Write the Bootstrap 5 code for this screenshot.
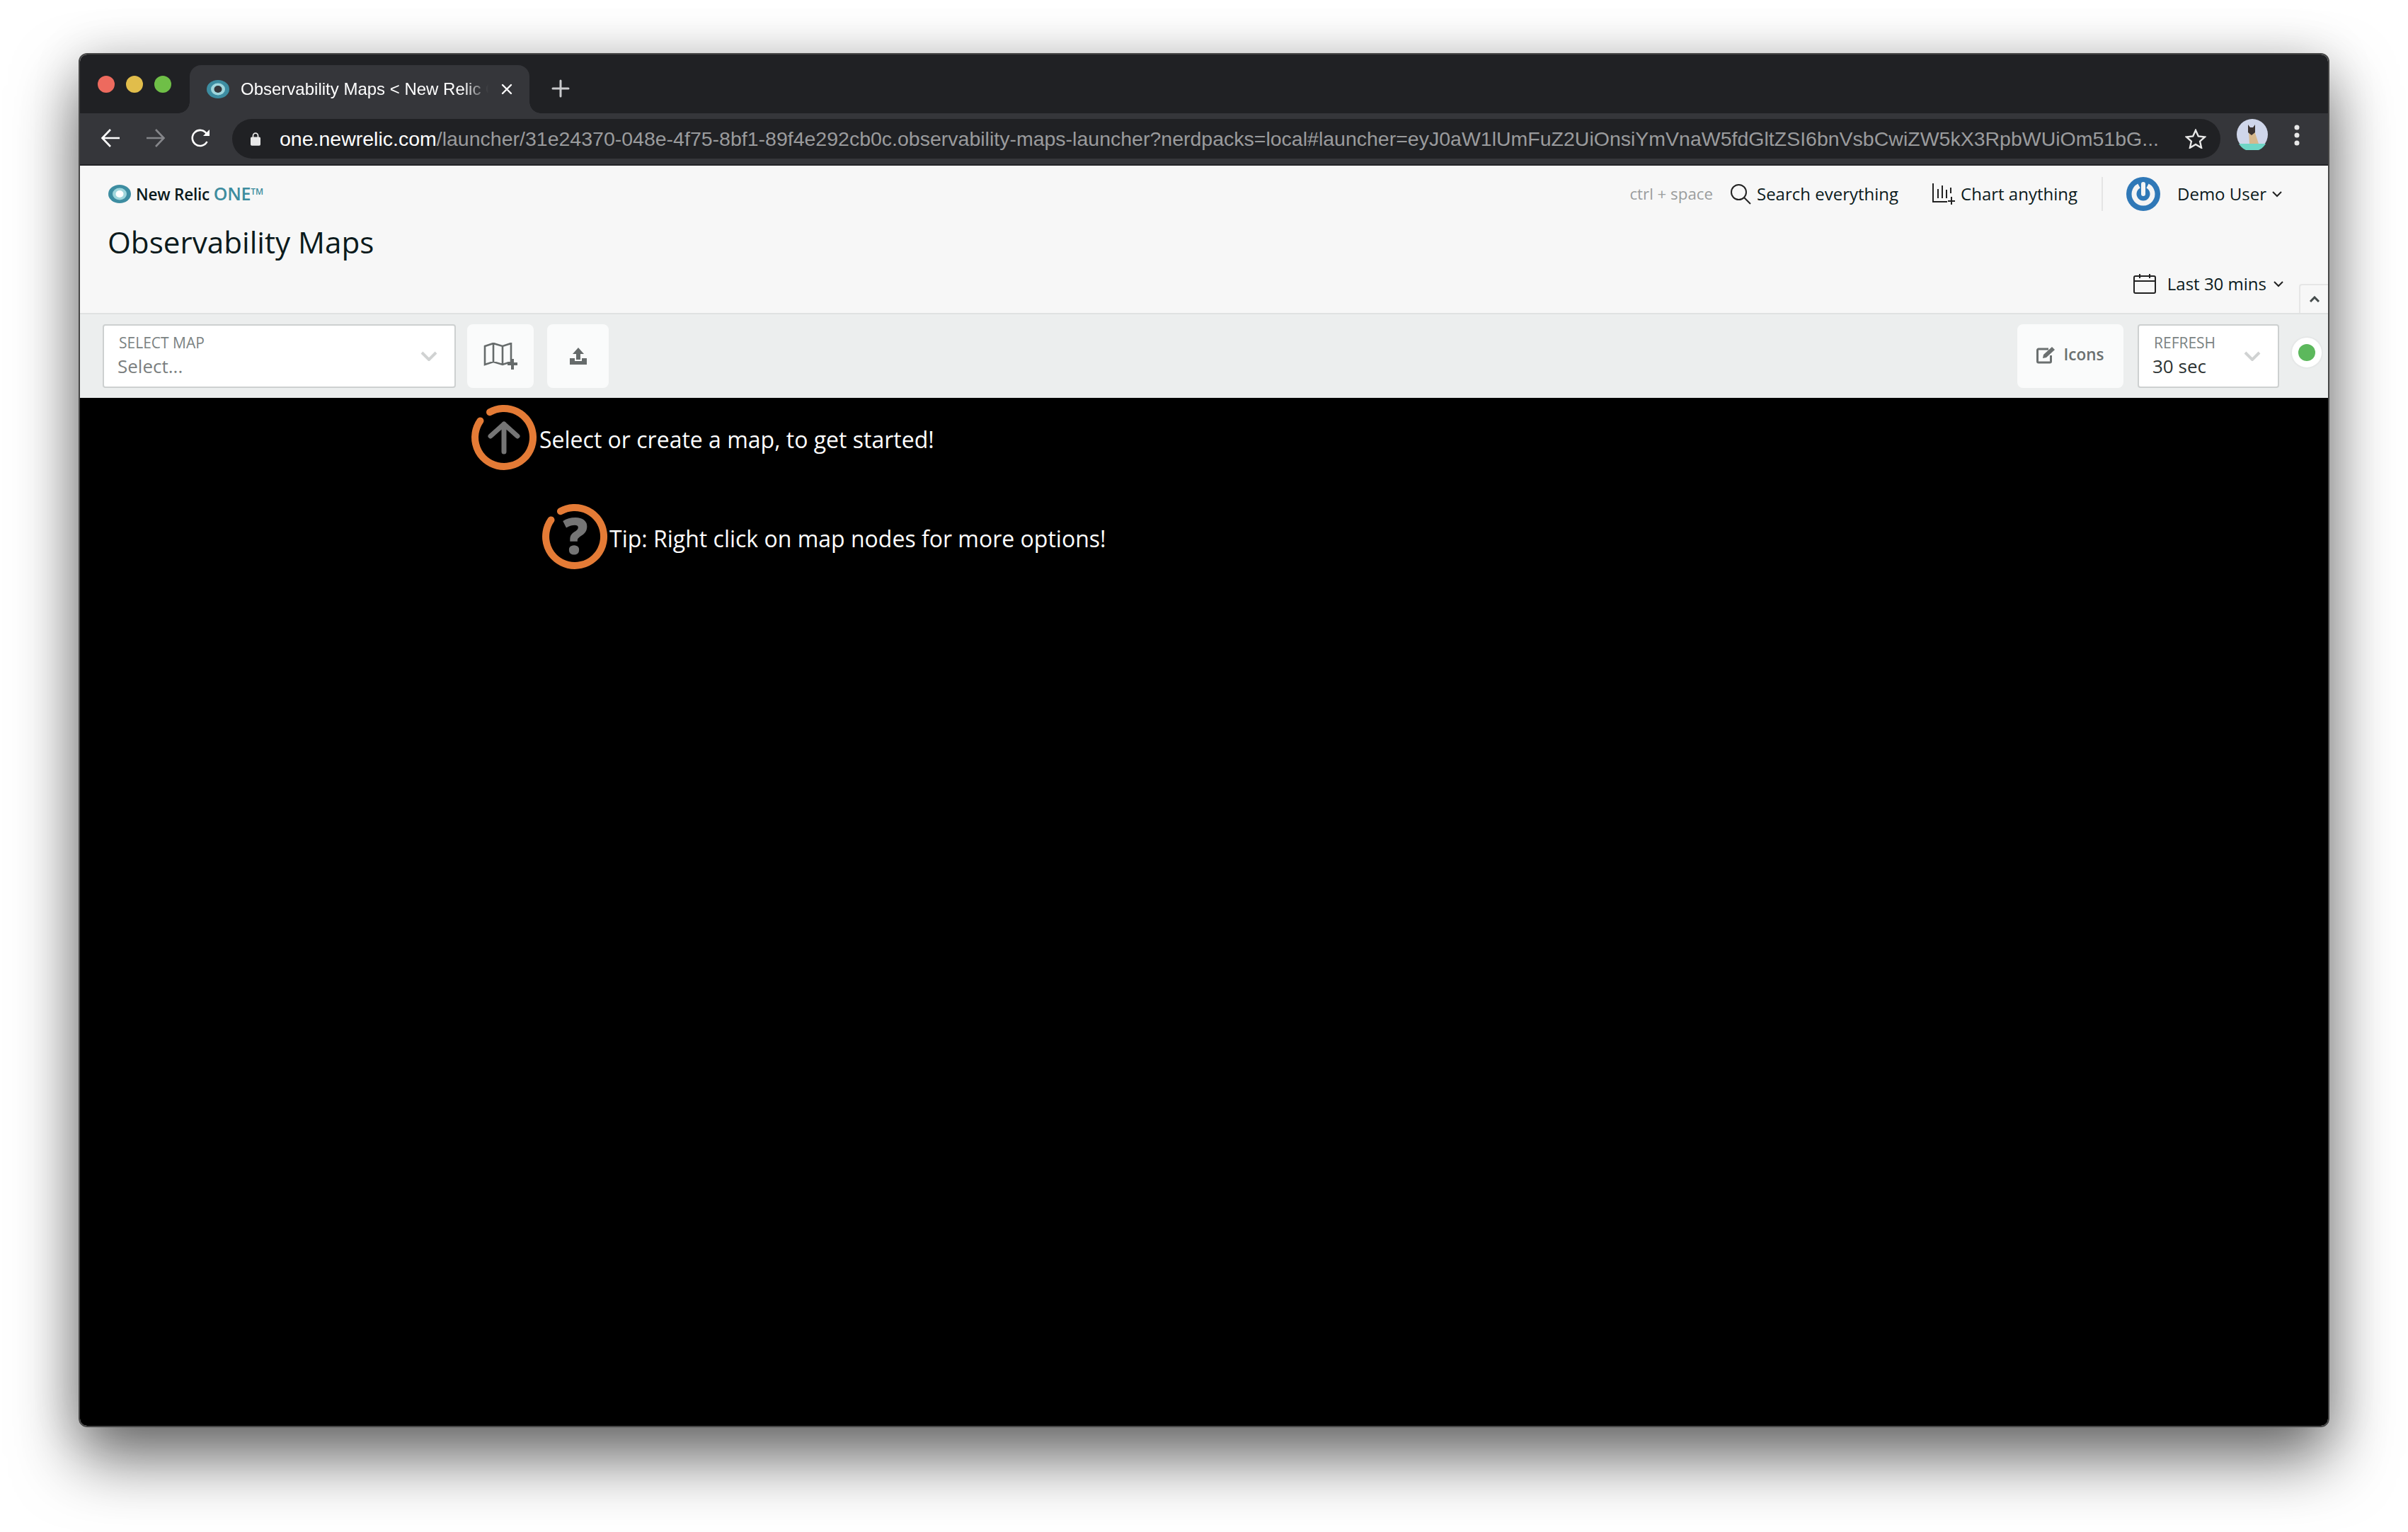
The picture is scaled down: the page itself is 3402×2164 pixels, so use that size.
<!DOCTYPE html>
<html lang="en">
<head>
<meta charset="utf-8">
<title>Observability Maps</title>
<link href="https://cdn.jsdelivr.net/npm/bootstrap@5.3.0/dist/css/bootstrap.min.css" rel="stylesheet">
<style>
html,body{height:100%;background:#fff;overflow:hidden}
body{font-family:"Open Sans",sans-serif;color:#0b1a1c}
.os-window{width:3180px;height:1941px;margin:75px 0 0 111px;border:2px solid #454545;border-radius:12px;overflow:hidden;box-shadow:0 44px 90px rgba(0,0,0,.58),0 0 70px rgba(0,0,0,.12);display:flex;flex-direction:column}
.tabstrip{height:83px;background:#202124;padding:15px 0 0 25px;flex:none}
.tl-dot{width:24px;height:24px;border-radius:50%;margin-top:15px}
.tl-r{background:#ed6a5e}.tl-y{background:#e1bd4b}.tl-g{background:#6fbf47}
.tl-dots{gap:16px;width:130px}
.chrome-tab{position:relative;width:480px;height:68px;background:#35363a;border-radius:16px 16px 0 0;padding:0 24px 0 24px;color:#fff;font:24px "Liberation Sans",Arial,sans-serif}
.chrome-tab::before,.chrome-tab::after{content:"";position:absolute;bottom:0;width:16px;height:16px}
.chrome-tab::before{left:-16px;background:radial-gradient(circle at 0 0,transparent 15.5px,#35363a 16px)}
.chrome-tab::after{right:-16px;background:radial-gradient(circle at 100% 0,transparent 15.5px,#35363a 16px)}
.tab-label{width:350px;margin-left:16px;white-space:nowrap;overflow:hidden;-webkit-mask-image:linear-gradient(90deg,#000 90%,transparent 100%);mask-image:linear-gradient(90deg,#000 90%,transparent 100%)}
.tab-new{margin:20px 0 0 31px}
.urlbar{height:72px;background:#35363a;border-bottom:2px solid #232427;box-sizing:content-box;flex:none}
.nav-glyphs{width:215px;height:70px;padding-left:29px;gap:28px}
.omnibox{width:2809px;height:56px;background:#202124;border-radius:28px;padding:0 20px 0 26px;font:28.5px/56px "Liberation Sans",Arial,sans-serif;color:#9a9b9d;white-space:nowrap}
.omnibox b{font-weight:400;color:#fff}
.url-text{margin-left:27px;width:2660px;flex:none}
.star-ico{margin-left:32px;flex:none}
.avatar-ico{margin-left:23px}
.menu-ico{margin-left:37px}
.pagehead{height:210px;background:#f7f7f7;border-bottom:2px solid #e0e2e2;position:relative;flex:none}
.headrow{height:80px;padding:0 65px 0 40px;font-size:24px}
.brand-name{font-size:22.5px;font-weight:600;margin-left:7px;letter-spacing:-.2px}
.brand-one{color:#3d8c9e;font-weight:600;font-size:25px}
.brand-tm{font-size:12px;vertical-align:8px;color:#3d8c9e}
.shortcut{color:#9a9d9d;font-size:22.3px}
.pagetitle{font-size:42.2px;font-weight:400;line-height:56px;margin:0 0 2px;padding-left:39px}
.vrule{width:2px;height:48px;background:#e4e4e4;margin-left:34px}
.power-ico{margin-left:33px}
.daterow{height:60px;padding:0 63px 2px 0;font-size:24px}
.date-chev{margin-left:10px}
.collapse-tab{position:absolute;right:0;bottom:0;width:41px;height:41px;border:2px solid #e6e6e6;border-width:2px 0 0 2px;border-radius:4px 0 0 0;display:flex;align-items:center;justify-content:center}
.toolrow{height:118px;background:#eceeee;padding:14px 7px 0 32px;flex:none}
.picker{background:#fff;border:2px solid #cdd0d0;border-radius:4px;height:90px;position:relative;padding:11px 0 0 19px;font-size:26px;flex:none}
.picker-map{width:499px;color:#7b7f7f}
.picker-refresh{width:200px;color:#2c3333;margin-left:20px}
.picker-label{display:block;font-size:21px;line-height:26px;color:#7a8282;margin-left:2px}
.picker-val{display:block;line-height:36px;margin-top:2px}
.picker-chev{position:absolute;right:24px;top:36px}
.tool-btn.btn{background:#fafbfb;border:0;border-radius:8px;height:90px;padding:0;display:flex;align-items:center;justify-content:center;flex:none}
.btn-map{width:94px;margin-left:16px}
.btn-up{width:87px;margin-left:19px}
.tool-btn.btn.btn-icons{width:150px;gap:11px;font-size:22.5px;font-weight:600;color:#6b7070;padding-bottom:4px}
.status-wrap{width:46px;height:46px;border-radius:50%;background:#fff;border:2px solid #e6e8e8;margin:17px 0 0 16px;flex:none}
.status-dot{width:24px;height:24px;border-radius:50%;background:#5cb85c}
.canvas-area{background:#000;flex:1 1 auto;color:#fff;padding-top:10px;font-size:32px}
.hint-one{margin-left:553px;gap:4px}
.hint-two{margin-left:653px;margin-top:48px;gap:3px}
.hint-text{padding-top:27px;line-height:44px}
.ring-ico{overflow:visible;flex:none}
.q-mark{font-family:"Open Sans",sans-serif;font-weight:800;font-size:70px;fill:#757575}
</style>
</head>
<body class="m-0">
<div class="os-window">
  <div class="tabstrip d-flex">
    <div class="tl-dots d-flex"><span class="tl-dot tl-r"></span><span class="tl-dot tl-y"></span><span class="tl-dot tl-g"></span></div>
    <div class="chrome-tab d-flex align-items-center">
      <svg width="32" height="26" viewBox="0 0 32 26"><ellipse cx="16" cy="13" rx="16" ry="13" fill="#3d8da1"/><ellipse cx="16" cy="13" rx="10" ry="8.5" fill="#9fd6dc"/><ellipse cx="16" cy="13" rx="5.5" ry="5" fill="#35363a"/></svg>
      <span class="tab-label">Observability Maps &lt; New Relic One</span>
      <svg width="16" height="16" viewBox="0 0 16 16" class="ms-auto" stroke="#fff" stroke-width="2.4" stroke-linecap="round"><path d="M2 2l12 12M14 2L2 14"/></svg>
    </div>
    <svg class="tab-new" width="26" height="26" viewBox="0 0 26 26" stroke="#c9cacc" stroke-width="3" stroke-linecap="round"><path d="M13 2v22M2 13h22"/></svg>
  </div>
  <div class="urlbar d-flex align-items-start">
    <div class="nav-glyphs d-flex align-items-center">
      <svg width="28" height="28" viewBox="0 0 28 28" fill="none" stroke="#fff" stroke-width="2.6"><path d="M27 14H3M14 2L2.5 14 14 26"/></svg>
      <svg width="28" height="28" viewBox="0 0 28 28" fill="none" stroke="#85868a" stroke-width="2.6" class="ms-2"><path d="M1 14h24M14 2l11.500 12L14 26"/></svg>
      <svg width="28" height="28" viewBox="0 0 28 28" fill="none" stroke="#fff" stroke-width="2.6" class="ms-2"><path d="M22.500 19a11 11 0 1 1-.5-11"/><path d="M26 2v9h-9z" fill="#fff" stroke="none"/></svg>
    </div>
    <div class="omnibox d-flex align-items-center mt-2">
      <svg width="16" height="22" viewBox="0 0 16 22" class="flex-none"><path d="M4 9V6a4 4 0 0 1 8 0v3" fill="none" stroke="#e8e8e8" stroke-width="2"/><rect y="8" width="16" height="14" rx="2" fill="#e8e8e8"/></svg>
      <span class="url-text"><b>one.newrelic.com</b>/launcher/31e24370-048e-4f75-8bf1-89f4e292cb0c.observability-maps-launcher?nerdpacks=local#launcher=eyJ0aW1lUmFuZ2UiOnsiYmVnaW5fdGltZSI6bnVsbCwiZW5kX3RpbWUiOm51bG...</span>
      <svg class="star-ico" width="30" height="28" viewBox="0 0 30 28" fill="none" stroke="#e8e8e8" stroke-width="2.4"><path d="M15 2l3.800 8.500 9.200 1-6.900 6.200 2 9.100L15 22l-8.100 4.800 2-9.100L2 11.500l9.200-1z"/></svg>
    </div>
    <svg width="44" height="44" viewBox="0 0 44 44" class="mt-2 avatar-ico"><circle cx="22" cy="22" r="22" fill="#cfd6ea"/><path d="M3 35h38a22 22 0 0 1-38 0z" fill="#6fd6c6"/><path d="M17 17l8 0 6 18h-13z" fill="#d7b88c"/><path d="M16 8l3 4h4l3-4v11l-5 4-5-4z" fill="#3a3230"/></svg>
    <svg width="8" height="32" viewBox="0 0 8 32" class="mt-3 menu-ico" fill="#e8e8e8"><circle cx="4" cy="4" r="3.500"/><circle cx="4" cy="15" r="3.500"/><circle cx="4" cy="26" r="3.500"/></svg>
  </div>
  <header class="pagehead">
    <div class="headrow d-flex align-items-center">
      <svg width="32" height="26" viewBox="0 0 32 26"><ellipse cx="16" cy="13" rx="16" ry="13" fill="#3d8da1"/><ellipse cx="16" cy="13" rx="10" ry="8.500" fill="#9fd6dc"/><ellipse cx="16" cy="13" rx="5.500" ry="5" fill="#fff"/></svg>
      <span class="brand-name">New Relic <span class="brand-one">ONE<span class="brand-tm">TM</span></span></span>
      <span class="shortcut ms-auto">ctrl + space</span>
      <svg width="30" height="30" viewBox="0 0 30 30" fill="none" stroke="#222" stroke-width="2" class="ms-4"><circle cx="12.500" cy="12.500" r="10.500"/><path d="M20 20l9 9"/></svg>
      <span class="ms-2">Search everything</span>
      <svg width="32" height="32" viewBox="0 0 32 32" fill="none" stroke="#222" stroke-width="2" class="ms-5"><path d="M1 1v26h20M8 9v13M14 4v18M20 10v12M26 7v8M27 20v11M22 26h10"/></svg>
      <span class="ms-2">Chart anything</span>
      <span class="vrule"></span>
      <svg width="48" height="48" viewBox="0 0 48 48" class="power-ico"><circle cx="24" cy="24" r="24" fill="#2f78b7"/><path d="M18 12.500a13 13 0 1 0 12 0" fill="none" stroke="#f4f4f4" stroke-width="7"/><path d="M24 10v14" stroke="#f4f4f4" stroke-width="6" stroke-linecap="round"/></svg>
      <span class="ms-4">Demo User</span>
      <svg width="14" height="9" viewBox="0 0 14 9" fill="none" stroke="#222" stroke-width="2" class="ms-2"><path d="M1 1l6 6 6-6"/></svg>
    </div>
    <h1 class="pagetitle">Observability Maps</h1>
    <div class="daterow d-flex align-items-center justify-content-end">
      <svg width="32" height="28" viewBox="0 0 32 28" fill="none" stroke="#222" stroke-width="2"><rect x="1" y="3" width="30" height="24" rx="2"/><path d="M1 10h30"/><path d="M9 0v6M23 0v6M13 3h6"/></svg>
      <span class="ms-3">Last 30 mins</span>
      <svg width="14" height="9" viewBox="0 0 14 9" fill="none" stroke="#222" stroke-width="2" class="date-chev"><path d="M1 1l6 6 6-6"/></svg>
    </div>
    <div class="collapse-tab"><svg width="14" height="9" viewBox="0 0 14 9" fill="none" stroke="#454c4c" stroke-width="3"><path d="M1 8l6-6 6 6"/></svg></div>
  </header>
  <div class="toolrow d-flex align-items-start">
    <div class="picker picker-map">
      <span class="picker-label">SELECT MAP</span>
      <span class="picker-val">Select...</span>
      <svg class="picker-chev" width="24" height="14" viewBox="0 0 24 14" fill="none" stroke="#d0d2d2" stroke-width="4"><path d="M2 2l10 10L22 2"/></svg>
    </div>
    <button type="button" class="btn tool-btn btn-map" aria-label="New map">
      <svg width="48" height="38" viewBox="0 0 48 38" fill="none" stroke="#666b6b" stroke-width="2.600"><path d="M2 5l12-4 13 4 12-4v26l-12 4-13-4-12 4zM14 1v26M27 5v26"/><path d="M41 23v15M34 30h14" stroke-width="4"/></svg>
    </button>
    <button type="button" class="btn tool-btn btn-up" aria-label="Upload">
      <svg width="24" height="24" viewBox="0 0 24 24" fill="#666b6b"><path d="M12 0l8 9h-5v8H9V9H4z"/><path d="M0 15h7v4h10v-4h7v9H0z"/></svg>
    </button>
    <button type="button" class="btn tool-btn btn-icons ms-auto">
      <svg width="27" height="25" viewBox="0 0 27 25" fill="none" stroke="#6b7070" stroke-width="3"><path d="M17 4H3a1.500 1.500 0 0 0-1.500 1.500v16A1.500 1.500 0 0 0 3 23h16a1.500 1.500 0 0 0 1.500-1.500V13"/><path d="M10 12l12-11 4 4-12 11-5 1z" fill="#6b7070" stroke="none"/></svg>
      Icons
    </button>
    <div class="picker picker-refresh">
      <span class="picker-label">REFRESH</span>
      <span class="picker-val">30 sec</span>
      <svg class="picker-chev" width="24" height="14" viewBox="0 0 24 14" fill="none" stroke="#d0d2d2" stroke-width="4"><path d="M2 2l10 10L22 2"/></svg>
    </div>
    <div class="status-wrap d-flex align-items-center justify-content-center"><span class="status-dot"></span></div>
  </div>
  <main class="canvas-area">
    <div class="hint-one d-flex align-items-start">
      <svg width="92" height="92" viewBox="0 0 92 92" fill="none" class="ring-ico"><path d="M26 10.200A41 41 0 1 1 12.500 22.400" stroke="#e47b36" stroke-width="10" stroke-linecap="round"/><path d="M46 66V27M27 44l19-17 19 17" stroke="#757575" stroke-width="7" stroke-linecap="round" stroke-linejoin="round"/></svg>
      <span class="hint-text">Select or create a map, to get started!</span>
    </div>
    <div class="hint-two d-flex align-items-start">
      <svg width="92" height="92" viewBox="0 0 92 92" fill="none" class="ring-ico"><path d="M26 10.200A41 41 0 1 1 12.500 22.400" stroke="#e47b36" stroke-width="10" stroke-linecap="round"/><text x="47" y="71" text-anchor="middle" class="q-mark">?</text></svg>
      <span class="hint-text">Tip: Right click on map nodes for more options!</span>
    </div>
  </main>
</div>
<script src="https://cdn.jsdelivr.net/npm/bootstrap@5.3.0/dist/js/bootstrap.bundle.min.js"></script>
</body>
</html>
